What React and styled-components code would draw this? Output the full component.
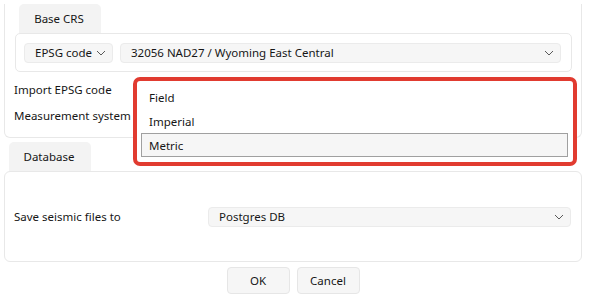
import styled, { createGlobalStyle } from "styled-components";

const GlobalStyle = createGlobalStyle`
    body {
        margin: 0;
        background: #ffffff;
        font-family: "Noto Sans", "Open Sans", sans-serif;
        font-size: 11.5px;
        color: #161616;
    }
`;

const Dialog = styled.div`
    position: relative;
    width: 592px;
    height: 299px;
    overflow: hidden;
`;

const Panel = styled.section`
    margin: 0 10px 0 4px;
    border: 1px solid #e8e8e8;
    border-top: ${(p) => (p.$cut ? "none" : "1px solid #e8e8e8")};
    border-radius: ${(p) => (p.$cut ? "0 0 6px 6px" : "6px")};
    height: ${(p) => p.$h}px;
    box-sizing: border-box;
`;

const Tab = styled.div`
    width: 82px;
    height: 29px;
    margin-left: ${(p) => p.$left}px;
    margin-top: 4px;
    background: #f3f3f3;
    border-radius: 5px 5px 0 0;
    display: flex;
    align-items: center;
    justify-content: center;
    box-sizing: border-box;
    padding-right: 2px;
`;

const GroupBox = styled.div`
    margin: 0 9px 4px 10px;
    height: 39px;
    border: 1px solid #e8e8e8;
    border-radius: 5px;
    box-sizing: border-box;
    display: flex;
    align-items: center;
    gap: 7px;
    padding: 0 10px 0 8px;
`;

const Combo = styled.div`
    width: ${(p) => p.$w}px;
    height: 20px;
    box-sizing: border-box;
    background: #f6f6f6;
    border: 1px solid #ebebeb;
    border-radius: 4px;
    display: flex;
    align-items: center;
    justify-content: space-between;
    padding: 0 6px 0 10px;
    flex-shrink: 0;
`;

const Chevron = () => (
    <svg width="10" height="6" viewBox="0 0 10 6">
        <path d="M1 1 L5 5 L9 1" fill="none" stroke="#5a5a5a" strokeWidth="1" />
    </svg>
);

const FieldRow = styled.div`
    height: 26px;
    display: flex;
    align-items: center;
    padding-left: 9px;
`;

const BigRow = styled.div`
    height: 100%;
    display: flex;
    align-items: center;
    padding-left: 9px;
`;

const Label = styled.span`
    width: 194px;
`;

const Buttons = styled.div`
    width: 578px;
    margin-left: 4px;
    margin-top: 5px;
    display: flex;
    justify-content: center;
    gap: 7px;
`;

const Button = styled.button`
    width: 63px;
    height: 27px;
    font: inherit;
    color: #161616;
    background: #f6f6f6;
    border: 1px solid #e6e6e6;
    border-radius: 4px;
`;

const Highlight = styled.div`
    position: absolute;
    left: 133px;
    top: 77px;
    width: 444px;
    height: 89px;
    box-sizing: border-box;
    border: 4px solid #e13b30;
    border-radius: 7px;
    background: #ffffff;
    padding: 4px 5px 0 4px;
`;

const Option = styled.div`
    height: 24px;
    box-sizing: border-box;
    display: flex;
    align-items: center;
    padding-left: 7px;
    border: 1px solid ${(p) => (p.$selected ? "#a0a0a0" : "transparent")};
    background: ${(p) => (p.$selected ? "#f6f6f6" : "transparent")};
`;

export default function App() {
    return (
        <Dialog>
            <GlobalStyle />
            <Panel $cut $h={134}>
                <Tab $left={14}>Base CRS</Tab>
                <GroupBox>
                    <Combo $w={89}>
                        EPSG code
                        <Chevron />
                    </Combo>
                    <Combo $w={441}>
                        32056 NAD27 / Wyoming East Central
                        <Chevron />
                    </Combo>
                </GroupBox>
                <FieldRow>Import EPSG code</FieldRow>
                <FieldRow>Measurement system</FieldRow>
            </Panel>
            <Tab $left={9}>Database</Tab>
            <Panel $h={91}>
                <BigRow>
                    <Label>Save seismic files to</Label>
                    <Combo $w={363}>
                        Postgres DB
                        <Chevron />
                    </Combo>
                </BigRow>
            </Panel>
            <Buttons>
                <Button>OK</Button>
                <Button>Cancel</Button>
            </Buttons>
            <Highlight>
                <Option>Field</Option>
                <Option>Imperial</Option>
                <Option $selected>Metric</Option>
            </Highlight>
        </Dialog>
    );
}
